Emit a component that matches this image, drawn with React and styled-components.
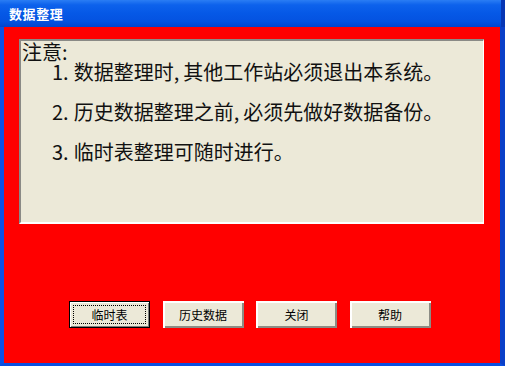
import styled, { createGlobalStyle } from "styled-components";

const GlobalStyle = createGlobalStyle`
  html, body {
    margin: 0;
    padding: 0;
    background: #ffffff;
  }
  body {
    font-family: "Noto Sans CJK SC", "Liberation Sans", sans-serif;
  }
`;

const Window = styled.div`
  width: 505px;
  height: 366px;
  display: flex;
  flex-direction: column;
  background: #0a4fe0;
  overflow: hidden;
`;

const TitleBar = styled.div`
  height: 27px;
  flex: 0 0 27px;
  display: flex;
  align-items: center;
  padding-left: 9px;
  background: linear-gradient(
    to bottom,
    #2a7df4 0%,
    #0d62ec 18%,
    #0558e6 50%,
    #0452e0 80%,
    #0344cc 100%
  );
  box-shadow: inset -4px 0 0 #0736b4;
`;

const Title = styled.span`
  color: #ffffff;
  font-size: 13px;
  font-weight: 700;
  letter-spacing: 0.6px;
  line-height: 1;
  margin-top: -1px;
`;

const Frame = styled.div`
  flex: 1;
  display: flex;
  border-left: 4px solid #0a52e4;
  border-right: 5px solid #0a3fc8;
  border-bottom: 3px solid #0a4fe0;
`;

const Body = styled.div`
  flex: 1;
  background: #ff0000;
  display: flex;
  flex-direction: column;
  padding: 12px 16px 0 15px;
`;

const Notice = styled.div`
  height: 185px;
  box-sizing: border-box;
  background: #ece9d8;
  border-top: 2px solid #8a8a86;
  border-left: 2px solid #8a8a86;
  border-right: 1px solid #ffffff;
  border-bottom: 2px solid #ffffff;
  color: #111111;
  font-size: 20px;
  line-height: 20px;
  padding-top: 1px;
`;

const Heading = styled.div`
  padding-left: 1px;
`;

const Items = styled.div`
  display: flex;
  flex-direction: column;
  gap: 20px;
  padding-left: 31px;
`;

const Item = styled.div`
  white-space: nowrap;
`;

const Num = styled.span`
  margin-right: 5px;
`;

const Comma = styled.span`
  margin-right: 4px;
`;

const ButtonRow = styled.div`
  display: flex;
  gap: 12.5px;
  margin-top: 77px;
  padding-left: 50px;
`;

const Button = styled.button`
  width: 81px;
  height: 27px;
  box-sizing: border-box;
  padding: 0;
  background: #ece9d8;
  font-family: "Noto Sans CJK SC", sans-serif;
  font-size: 12px;
  color: #000000;
  position: relative;
  border: ${(p) => (p.$default ? "1px solid #000000" : "none")};
  box-shadow: ${(p) =>
    p.$default
      ? "inset 1px 1px 0 #ffffff, inset -1px -1px 0 #808080"
      : "inset 2px 2px 0 #ffffff, inset -2px -2px 0 #8c8c84"};
  cursor: default;

  &::after {
    content: "";
    display: ${(p) => (p.$default ? "block" : "none")};
    position: absolute;
    inset: 3px;
    border: 1px dotted #000000;
  }
`;

const items = [
  { n: "1.", a: "数据整理时", b: "其他工作站必须退出本系统。" },
  { n: "2.", a: "历史数据整理之前", b: "必须先做好数据备份。" },
  { n: "3.", a: "临时表整理可随时进行。" },
];

const buttons = ["临时表", "历史数据", "关闭", "帮助"];

export default function App() {
  return (
    <>
      <GlobalStyle />
      <Window>
        <TitleBar>
          <Title>数据整理</Title>
        </TitleBar>
        <Frame>
          <Body>
            <Notice>
              <Heading>注意:</Heading>
              <Items>
                {items.map((item) => (
                  <Item key={item.n}>
                    <Num>{item.n}</Num>
                    {item.a}
                    {item.b && (
                      <>
                        <Comma>,</Comma>
                        {item.b}
                      </>
                    )}
                  </Item>
                ))}
              </Items>
            </Notice>
            <ButtonRow>
              {buttons.map((label, i) => (
                <Button key={label} $default={i === 0}>
                  {label}
                </Button>
              ))}
            </ButtonRow>
          </Body>
        </Frame>
      </Window>
    </>
  );
}
